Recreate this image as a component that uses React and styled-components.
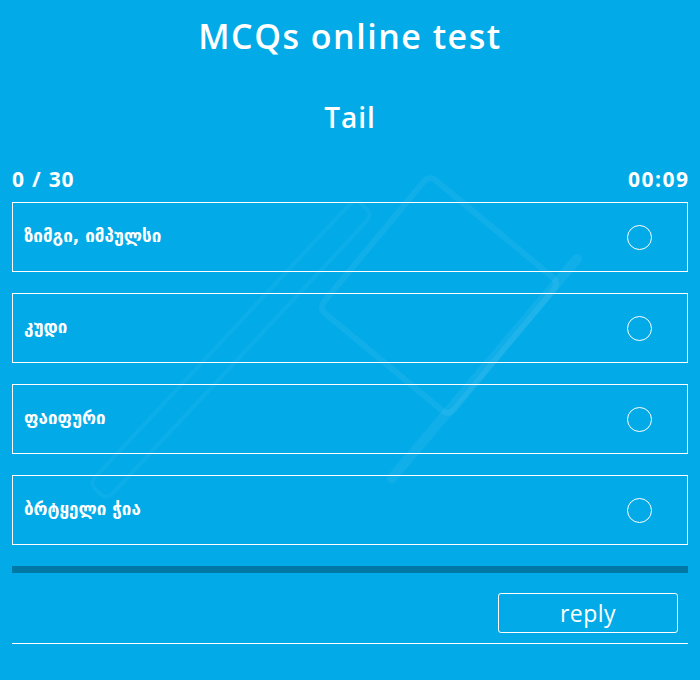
import React, { useState } from 'react';
import styled, { createGlobalStyle } from 'styled-components';

const GlobalStyle = createGlobalStyle`
  html, body {
    margin: 0;
    background: #02abe8;
  }
  body {
    font-family: 'Open Sans', 'DejaVu Sans', sans-serif;
    color: #fff;
  }
  * { box-sizing: border-box; }
`;

const options = [
  'ზიმგი, იმპულსი',
  'კუდი',
  'ფაიფური',
  'ბრტყელი ჭია',
];

const App = () => {
  const [picked, setPicked] = useState(null);

  return (
    <>
      <GlobalStyle />
      <Page>
        <Backdrop width="700" height="680" viewBox="0 0 700 680">
          <rect
            x="354.5" y="209" width="169" height="173" rx="8"
            transform="rotate(39.7 439 295.5)"
            fill="none" stroke="rgba(255,255,255,0.06)" strokeWidth="6"
          />
          <line x1="577" y1="259" x2="392" y2="478"
            stroke="rgba(255,255,255,0.06)" strokeWidth="10" strokeLinecap="round" />
          <rect
            x="36" y="337" width="390" height="24" rx="8"
            transform="rotate(-47 231 349)"
            fill="none" stroke="rgba(255,255,255,0.045)" strokeWidth="4"
          />
        </Backdrop>

        <Title>MCQs online test</Title>
        <Question>Tail</Question>

        <Stats>
          <span>0 / 30</span>
          <Timer>00:09</Timer>
        </Stats>

        <OptionList>
          {options.map((text, i) => (
            <Option key={i} onClick={() => setPicked(i)}>
              <OptionText>{text}</OptionText>
              <Radio $checked={picked === i} />
            </Option>
          ))}
        </OptionList>

        <Progress />

        <Footer>
          <ReplyButton>reply</ReplyButton>
        </Footer>
        <Rule />
      </Page>
    </>
  );
};

/* --- styles --- */
const Page = styled.div`
  position: relative;
  width: 700px;
  min-height: 680px;
  padding: 16px 12px 0;
  overflow: hidden;
`;

const Backdrop = styled.svg`
  position: absolute;
  left: 0;
  top: 0;
  pointer-events: none;
`;

const Title = styled.h1`
  position: relative;
  margin: 0;
  font-size: 34px;
  line-height: 40px;
  font-weight: 600;
  letter-spacing: 1.5px;
  text-align: center;
`;

const Question = styled.h2`
  position: relative;
  margin: 44px 0 0;
  font-size: 28px;
  line-height: 34px;
  font-weight: 600;
  letter-spacing: 1px;
  text-align: center;
`;

const Stats = styled.div`
  position: relative;
  display: flex;
  justify-content: space-between;
  margin-top: 33px;
  font-size: 21px;
  line-height: 24px;
  font-weight: 700;
  letter-spacing: 0.8px;
  word-spacing: 1px;
`;

const Timer = styled.span`
  letter-spacing: 1.5px;
  margin-right: -1.5px;
`;

const OptionList = styled.div`
  position: relative;
  display: flex;
  flex-direction: column;
  gap: 21px;
  margin-top: 11px;
`;

const Option = styled.div`
  display: flex;
  align-items: center;
  justify-content: space-between;
  height: 70px;
  padding: 0 35px 0 11px;
  border: 1px solid #fff;
  cursor: pointer;
`;

const OptionText = styled.span`
  font-family: 'DejaVu Sans', sans-serif;
  font-size: 17px;
  font-weight: 700;
  margin-top: -2px;
`;

const Radio = styled.span`
  width: 25px;
  height: 25px;
  border-radius: 50%;
  border: 1px solid #fff;
  background: ${p => (p.$checked ? '#fff' : 'transparent')};
`;

const Progress = styled.div`
  position: relative;
  height: 7px;
  margin-top: 21px;
  background: #0078a6;
`;

const Footer = styled.div`
  position: relative;
  display: flex;
  justify-content: flex-end;
  padding-right: 10px;
  margin-top: 20px;
`;

const ReplyButton = styled.button`
  width: 180px;
  height: 40px;
  background: transparent;
  border: 1px solid #fff;
  border-radius: 3px;
  color: #fff;
  font-family: 'Open Sans', sans-serif;
  font-size: 23px;
  letter-spacing: 0.5px;
  cursor: pointer;
`;

const Rule = styled.div`
  position: relative;
  height: 1px;
  margin-top: 10px;
  background: #fff;
`;

export default App;
